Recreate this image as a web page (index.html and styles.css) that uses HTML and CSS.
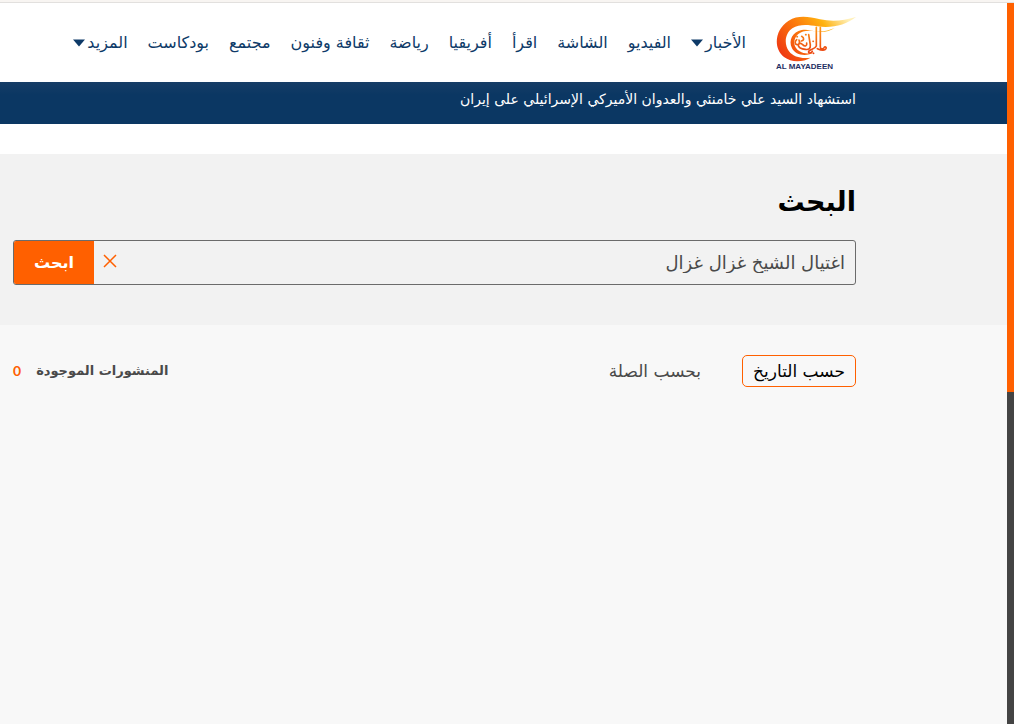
FILE: index.html
```html
<!DOCTYPE html>
<html lang="ar" dir="rtl">
<head>
<meta charset="utf-8">
<meta name="viewport" content="width=device-width, initial-scale=1">
<title>البحث - الميادين</title>
<link rel="stylesheet" href="styles.css">
</head>
<body>
<div class="layout">
  <div class="scroll-rail" aria-hidden="true"><div class="scroll-thumb"></div><div class="scroll-rest"></div></div>
  <div class="page">
    <header class="header container">
      <a class="logo" href="#" aria-label="الميادين">
        <svg class="logo-mark" viewBox="48 48 240 138" aria-hidden="true">
          <defs>
            <linearGradient id="flame" gradientUnits="userSpaceOnUse" x1="75" y1="175" x2="250" y2="40">
              <stop offset="0" stop-color="#ef3a12"/>
              <stop offset=".4" stop-color="#fc7a0c"/>
              <stop offset=".7" stop-color="#ffb210"/>
              <stop offset="1" stop-color="#fff0b8"/>
            </linearGradient>
            <linearGradient id="script" gradientUnits="userSpaceOnUse" x1="0" y1="75" x2="0" y2="160">
              <stop offset="0" stop-color="#ffa016"/>
              <stop offset="1" stop-color="#ea4012"/>
            </linearGradient>
          </defs>
          <path fill="url(#flame)" d="M288 51C250 63 215 65 180 58 145 50 115 45 86 62 45 87 38 145 72 171c22 17 56 16 80 2-26 4-51-1-65-19-16-22-12-54 10-69 22-14 49-10 75-6 45 6 85-4 116-28z"/>
          <path fill="url(#flame)" d="M224 84c-18 12-38 14-57 10-20-4-40-3-53 9-17 16-14 40 5 51 13 8 28 8 44 3-26 15-57 8-67-12-12-24 2-50 29-55 17-3 28 2 44 4 19 3 38-3 55-10z"/>
          <g fill="none" stroke="url(#script)" stroke-width="5" stroke-linecap="round" stroke-linejoin="round">
            <path d="M181 82v58c0 8 7 8 11 3 3-5 8-2 6 3-4 7-19 3-26 0M169 82v56c-4 10-17 9-23 16-2 7 9 6 11 0"/>
            <path d="M146 104l5 31c1 12-6 15-15 13-12-1-22-6-21-13 1-6 9-6 13-1 7 7 14 4 12-5M110 119c-7 6-5 14 1 15 7 0 9-7 6-14M125 109c9 5 7 12-1 14"/>
            <path d="M111 110h1M137 104h1M159 124h1M160 160h1"/>
          </g>
        </svg>
        <span class="logo-name" dir="ltr">AL MAYADEEN</span>
      </a>
      <nav class="nav">
        <a class="nav-link" href="#">الأخبار<svg class="caret" viewBox="0 0 12 8" aria-hidden="true"><path d="M0 .5h12L6 7.500z"/></svg></a>
        <a class="nav-link" href="#">الفيديو</a>
        <a class="nav-link" href="#">الشاشة</a>
        <a class="nav-link" href="#">اقرأ</a>
        <a class="nav-link" href="#">أفريقيا</a>
        <a class="nav-link" href="#">رياضة</a>
        <a class="nav-link" href="#">ثقافة وفنون</a>
        <a class="nav-link" href="#">مجتمع</a>
        <a class="nav-link" href="#">بودكاست</a>
        <a class="nav-link" href="#">المزيد<svg class="caret" viewBox="0 0 12 8" aria-hidden="true"><path d="M0 .5h12L6 7.500z"/></svg></a>
      </nav>
    </header>
    <div class="topic container"><a class="topic-link" href="#">استشهاد السيد علي خامنئي والعدوان الأميركي الإسرائيلي على إيران</a></div>
    <section class="search container">
      <h1 class="title">البحث</h1>
      <form class="search-box">
        <input class="search-input" type="text" aria-label="البحث" value="اغتيال الشيخ غزال غزال">
        <button class="clear" type="reset" aria-label="مسح"><svg class="clear-icon" viewBox="0 0 14 14" aria-hidden="true"><path d="M1 1l12 12M13 1L1 13"/></svg></button>
        <button class="submit" type="submit">ابحث</button>
      </form>
    </section>
    <main class="results container">
      <div class="sort">
        <button class="sort-option sort-active" type="button">حسب التاريخ</button>
        <button class="sort-option" type="button">بحسب الصلة</button>
      </div>
      <p class="count">المنشورات الموجودة<span class="count-value">0</span></p>
    </main>
  </div>
</div>
</body>
</html>
```
FILE: styles.css
```css
* { box-sizing: border-box; }
body {
  margin: 0;
  background: #f8f8f8;
  color: #4a4a4a;
  font-family: "DejaVu Sans", sans-serif;
}
button, input { font: inherit; color: inherit; }
a { text-decoration: none; }
.layout {
  display: flex;
  min-height: 100vh;
  border-top: 2px solid #f8f5f2;
}
.scroll-rail {
  display: flex;
  flex: none;
  flex-direction: column;
  width: 7px;
  border-top: 1px solid #e2e0de;
}
.scroll-thumb { flex: 54; background: #ff6000; }
.scroll-rest { flex: 46; background: #444; }
.page { flex: 1; min-width: 0; border-top: 1px solid #e2e0de; }
.container { padding-right: 15%; padding-left: 13px; }
.header {
  display: flex;
  align-items: flex-start;
  gap: 30px;
  height: 79px;
  padding-top: 13px;
  background: #fff;
}
.logo {
  flex: none;
  display: flex;
  flex-direction: column;
  width: 80px;
}
.logo-mark { width: 80px; height: 46px; }
.logo-name {
  font: bold 8px/10px "Liberation Sans", sans-serif;
  color: #1f2f63;
  white-space: nowrap;
}
.nav { display: flex; gap: 20px; padding-top: 15px; }
.nav-link {
  display: flex;
  align-items: center;
  gap: 2px;
  color: #0e3a68;
  font-size: 16px;
  line-height: 24px;
  white-space: nowrap;
}
.caret { width: 12px; height: 8px; fill: #0e3a68; }
.topic {
  height: 42px;
  padding-top: 5px;
  background: linear-gradient(#163d66, #0b3763 30%);
}
.topic-link { color: #fff; font-size: 14px; line-height: 24px; }
.search {
  border-top: 30px solid #fff;
  background: #f2f2f2;
  padding-top: 28px;
  padding-bottom: 40px;
}
.title { margin: 0 0 18px; font-size: 27px; line-height: 40px; color: #000; }
.search-box {
  display: flex;
  height: 45px;
  border: 1px solid #6b6b6b;
  border-radius: 3px;
  overflow: hidden;
}
.search-input {
  flex: 1;
  min-width: 0;
  padding: 0 10px;
  border: 0;
  background: transparent;
  font-size: 18px;
}
.clear {
  display: flex;
  align-items: center;
  padding: 0 9px 4px;
  border: 0;
  background: transparent;
}
.clear-icon { width: 14px; height: 14px; fill: none; stroke: #ff6000; stroke-width: 1.5; }
.submit {
  width: 80px;
  padding: 0;
  border: 0;
  background: #ff6000;
  color: #fff;
  font-size: 16px;
  font-weight: bold;
}
.results {
  display: flex;
  justify-content: space-between;
  align-items: center;
  padding-top: 30px;
}
.sort { display: flex; gap: 30px; }
.sort-option {
  height: 32px;
  padding: 0 10px;
  border: 1px solid transparent;
  border-radius: 5px;
  background: transparent;
  font-size: 17px;
}
.sort-active { border-color: #ff6000; color: #000; }
.count { display: flex; align-items: center; gap: 15px; margin: 0; font-size: 13px; font-weight: bold; line-height: 24px; }
.count-value { color: #ff6000; font-family: Lato, sans-serif; font-size: 14px; }
```
